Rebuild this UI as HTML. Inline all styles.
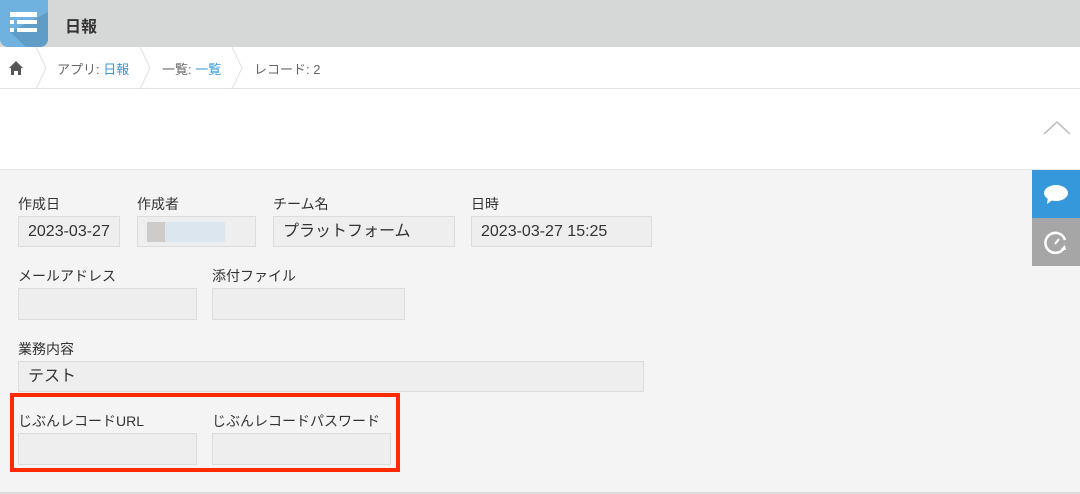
<!DOCTYPE html>
<html><head><meta charset="utf-8"><style>
*{margin:0;padding:0;box-sizing:border-box}
body{width:1080px;height:494px;overflow:hidden;background:#f4f4f4;font-family:"Liberation Sans","Noto Sans CJK JP",sans-serif;color:#333;position:relative}
.a{position:absolute}
.hdr{left:0;top:0;width:1080px;height:47px;background:#d6d7d7}
.bc{left:0;top:47px;width:1080px;height:42px;background:#fff;border-bottom:1px solid #e3e3e3}
.wh{left:0;top:89px;width:1080px;height:81px;background:#fff;border-bottom:1px solid #e6e6e6}
.lbl{font-size:14px;color:#333}
.box{background:#eeeeee;border:1px solid #dcdcdc;font-size:16px;color:#333;padding-left:9px;line-height:29px}
.crumb{font-size:13px;color:#666;top:59px}
.crumb b{font-weight:normal;color:#3498db}
</style></head><body>
<div class="a hdr"></div>
<div class="a" style="left:0;top:0;width:48px;height:47px;background:#6fb2df;border-radius:0 0 8px 8px;overflow:hidden">
<svg width="48" height="47"><polygon points="10,32 48,12 48,47 26,47" fill="#5f9cc6"/>
<rect x="10" y="12" width="27" height="5" fill="#fff"/><rect x="10" y="20" width="4" height="4" fill="#fff"/><rect x="17" y="20" width="20" height="4" fill="#fff"/><rect x="10" y="28" width="4" height="4" fill="#fff"/><rect x="17" y="28" width="20" height="4" fill="#fff"/></svg></div>
<div class="a" style="left:65px;top:13px;font-size:16px;font-weight:bold;color:#333">日報</div>
<div class="a bc"></div>
<svg class="a" style="left:0;top:47px" width="330" height="42"><path d="M9 21 L16 14 L23 21 L21 21 L21 28 L18 28 L18 24 L14 24 L14 28 L11 28 L11 21Z" fill="#555"/><g fill="none" stroke="#e0e0e0" stroke-width="1"><path d="M36 0 L46 21 L36 42"/><path d="M140 0 L150 21 L140 42"/><path d="M232 0 L242 21 L232 42"/></g></svg>
<div class="a crumb" style="left:57px">アプリ: <b>日報</b></div>
<div class="a crumb" style="left:162px">一覧: <b>一覧</b></div>
<div class="a crumb" style="left:254px">レコード: 2</div>
<div class="a wh"></div>
<svg class="a" style="left:1042px;top:120px" width="30" height="16"><path d="M2 14 L15 2 L28 14" fill="none" stroke="#bbb" stroke-width="1.5"/></svg>
<div class="a" style="left:1032px;top:170px;width:48px;height:48px;background:#3498db"></div>
<svg class="a" style="left:1032px;top:170px" width="48" height="48"><ellipse cx="24" cy="23" rx="12" ry="8" fill="#fff"/><path d="M16 27 L15 34 L22 29Z" fill="#fff"/></svg>
<div class="a" style="left:1032px;top:218px;width:48px;height:48px;background:#a6a6a6"></div>
<svg class="a" style="left:1032px;top:218px" width="48" height="48"><path d="M32 30 A10 10 0 1 1 33 22" fill="none" stroke="#fff" stroke-width="2.5"/><path d="M23 26 L27 21" stroke="#fff" stroke-width="2"/><path d="M29 31 L34 32 L33 27Z" fill="#fff"/></svg>
<div class="a lbl" style="left:18px;top:194px">作成日</div>
<div class="a lbl" style="left:137px;top:194px">作成者</div>
<div class="a lbl" style="left:273px;top:194px">チーム名</div>
<div class="a lbl" style="left:471px;top:194px">日時</div>
<div class="a box" style="left:18px;top:216px;width:102px;height:31px">2023-03-27</div>
<div class="a box" style="left:137px;top:216px;width:119px;height:31px"><span style="display:inline-block;vertical-align:middle;width:18px;height:20px;background:#cfcbc8"></span><span style="display:inline-block;vertical-align:middle;width:60px;height:20px;background:#dbe6ee"></span></div>
<div class="a box" style="left:273px;top:216px;width:182px;height:31px">プラットフォーム</div>
<div class="a box" style="left:471px;top:216px;width:181px;height:31px">2023-03-27 15:25</div>
<div class="a lbl" style="left:18px;top:266px">メールアドレス</div>
<div class="a lbl" style="left:212px;top:266px">添付ファイル</div>
<div class="a box" style="left:18px;top:288px;width:179px;height:32px"></div>
<div class="a box" style="left:212px;top:288px;width:193px;height:32px"></div>
<div class="a lbl" style="left:18px;top:339px">業務内容</div>
<div class="a box" style="left:18px;top:361px;width:626px;height:31px">テスト</div>
<div class="a" style="left:10px;top:393px;width:390px;height:79px;border:4px solid #ff2a00"></div>
<div class="a lbl" style="left:18px;top:411px">じぶんレコードURL</div>
<div class="a lbl" style="left:212px;top:411px">じぶんレコードパスワード</div>
<div class="a box" style="left:18px;top:433px;width:179px;height:32px"></div>
<div class="a box" style="left:212px;top:433px;width:179px;height:32px"></div>
<div class="a" style="left:0;top:492px;width:1080px;height:2px;background:#ddd"></div>
</body></html>
